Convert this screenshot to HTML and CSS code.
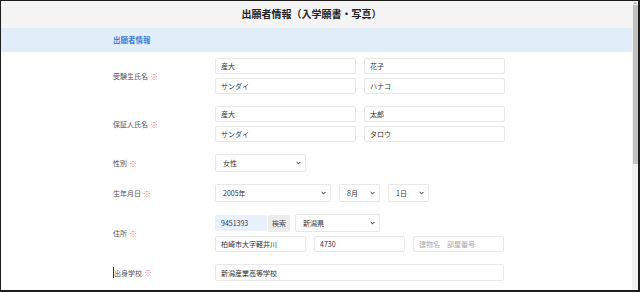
FILE: index.html
```html
<!DOCTYPE html>
<html lang="ja">
<head>
    <meta charset="UTF-8">
    <title>出願者情報（入学願書・写真）</title>
    <link rel="stylesheet" href="styles.css">
</head>
<body>
<div class="frame">
    <div class="page">
        <h1 class="title">出願者情報（入学願書・写真）</h1>
        <div class="section">出願者情報</div>

        <div class="rows">
            <!-- 受験生氏名 -->
            <div class="row">
                <div class="label">受験生氏名<span class="req">※</span></div>
                <div class="fields">
                    <div class="line">
                        <input type="text" class="textfield name" value="産大">
                        <input type="text" class="textfield name" value="花子">
                    </div>
                    <div class="line">
                        <input type="text" class="textfield name" value="サンダイ">
                        <input type="text" class="textfield name" value="ハナコ">
                    </div>
                </div>
            </div>

            <!-- 保証人氏名 -->
            <div class="row">
                <div class="label">保証人氏名<span class="req">※</span></div>
                <div class="fields">
                    <div class="line">
                        <input type="text" class="textfield name" value="産大">
                        <input type="text" class="textfield name" value="太郎">
                    </div>
                    <div class="line">
                        <input type="text" class="textfield name" value="サンダイ">
                        <input type="text" class="textfield name" value="タロウ">
                    </div>
                </div>
            </div>

            <!-- 性別 -->
            <div class="row">
                <div class="label">性別<span class="req">※</span></div>
                <div class="fields">
                    <div class="line">
                        <div class="selectbox sex">
                            <span>女性</span>
                            <svg width="5" height="4" viewBox="0 0 5 4"><path d="M0.6 1 L2.5 2.9 L4.4 1" fill="none" stroke="#333" stroke-width="1"/></svg>
                        </div>
                    </div>
                </div>
            </div>

            <!-- 生年月日 -->
            <div class="row">
                <div class="label">生年月日<span class="req">※</span></div>
                <div class="fields">
                    <div class="line">
                        <div class="selectbox year">
                            <span>2005年</span>
                            <svg width="5" height="4" viewBox="0 0 5 4"><path d="M0.6 1 L2.5 2.9 L4.4 1" fill="none" stroke="#333" stroke-width="1"/></svg>
                        </div>
                        <div class="selectbox month">
                            <span>8月</span>
                            <svg width="5" height="4" viewBox="0 0 5 4"><path d="M0.6 1 L2.5 2.9 L4.4 1" fill="none" stroke="#333" stroke-width="1"/></svg>
                        </div>
                        <div class="selectbox day">
                            <span>1日</span>
                            <svg width="5" height="4" viewBox="0 0 5 4"><path d="M0.6 1 L2.5 2.9 L4.4 1" fill="none" stroke="#333" stroke-width="1"/></svg>
                        </div>
                    </div>
                </div>
            </div>

            <!-- 住所 -->
            <div class="row">
                <div class="label">住所<span class="req">※</span></div>
                <div class="fields">
                    <div class="line zipline">
                        <input type="text" class="textfield zip" value="9451393">
                        <button type="button" class="searchBtn">検索</button>
                        <div class="selectbox pref">
                            <span>新潟県</span>
                            <svg width="5" height="4" viewBox="0 0 5 4"><path d="M0.6 1 L2.5 2.9 L4.4 1" fill="none" stroke="#333" stroke-width="1"/></svg>
                        </div>
                    </div>
                    <div class="line">
                        <input type="text" class="textfield addr" value="柏崎市大字軽井川">
                        <input type="text" class="textfield addr" value="4730">
                        <input type="text" class="textfield addr" placeholder="建物名　部屋番号">
                    </div>
                </div>
            </div>

            <!-- 出身学校 -->
            <div class="row">
                <div class="label"><span class="caret"></span>出身学校<span class="req">※</span></div>
                <div class="fields">
                    <div class="line">
                        <input type="text" class="textfield school" value="新潟産業高等学校">
                    </div>
                </div>
            </div>
        </div>
    </div>
    <div class="scrollbar">
        <div class="arrow"></div>
        <div class="thumb"></div>
    </div>
</div>
</body>
</html>
```

FILE: styles.css
```css
* {
    margin: 0;
    padding: 0;
    box-sizing: border-box;
}
html, body {
    width: 640px;
    height: 292px;
    overflow: hidden;
    background: #fff;
}
body {
    font-family: "Noto Sans CJK JP", "Noto Sans", sans-serif;
    color: #444;
}
.frame {
    display: flex;
    width: 640px;
    height: 292px;
    border-top: 1px solid #1e1e1e;
    border-left: 1px solid #1e1e1e;
    border-right: 2px solid #1e1e1e;
    border-bottom: 2px solid #1e1e1e;
}
.page {
    flex: 1;
    overflow: hidden;
}
.title {
    height: 27px;
    line-height: 25px;
    background: #f4f4f4;
    color: #222;
    font-size: 10px;
    font-weight: bold;
    text-align: center;
    padding-right: 10px;
}
.section {
    height: 24px;
    line-height: 24px;
    background: #e1eefa;
    color: #3f7fd4;
    font-size: 7.5px;
    font-weight: bold;
    padding-left: 112px;
}
.rows {
    display: flex;
    flex-direction: column;
    gap: 12px;
    padding-top: 6px;
}
.row {
    display: grid;
    grid-template-columns: 214px 1fr;
    align-items: center;
}
.label {
    padding-left: 112px;
    font-size: 7px;
    color: #555;
    display: flex;
    align-items: center;
}
.req {
    color: #ee7b7b;
    font-size: 8px;
    margin-left: 2px;
}
.caret {
    display: inline-block;
    width: 1px;
    height: 11px;
    background: #333;
}
.fields {
    display: flex;
    flex-direction: column;
    gap: 4px;
}
.line {
    display: flex;
    gap: 8px;
    align-items: center;
}
.textfield {
    height: 16px;
    border: 1px solid #e8e8e8;
    border-radius: 2px;
    padding: 0 5px;
    font-family: inherit;
    font-size: 7px;
    color: #333;
    background: #fff;
    outline: none;
}
.textfield::placeholder {
    color: #aaa;
}
.textfield.name {
    width: 141px;
}
.selectbox {
    height: 18px;
    border: 1px solid #e8e8e8;
    border-radius: 2px;
    padding: 0 4px 0 7px;
    font-size: 7px;
    color: #333;
    display: flex;
    align-items: center;
    justify-content: space-between;
    background: #fff;
}
.selectbox.sex {
    width: 91px;
}
.selectbox.year {
    width: 116px;
}
.selectbox.month {
    width: 41px;
}
.selectbox.day {
    width: 41px;
}
.zipline {
    gap: 0;
}
.textfield.zip {
    width: 52px;
    background: #e8f0fe;
    border-color: #e8f0fe;
}
.searchBtn {
    width: 22px;
    height: 17px;
    margin-left: 1px;
    border: none;
    border-radius: 2px;
    background: #ececec;
    font-family: inherit;
    font-size: 7px;
    color: #444;
}
.selectbox.pref {
    width: 85px;
    margin-left: 5px;
}
.textfield.addr {
    width: 91px;
}
.textfield.school {
    width: 289px;
    height: 17px;
}
.scrollbar {
    width: 6px;
    background: #f1f1f1;
    display: flex;
    flex-direction: column;
    align-items: center;
}
.arrow {
    width: 0;
    height: 0;
    margin-top: 1px;
    border-left: 2px solid transparent;
    border-right: 2px solid transparent;
    border-bottom: 2px solid #a3a3a3;
}
.thumb {
    width: 5px;
    height: 159px;
    margin-top: 1px;
    background: #c1c1c1;
}
```
